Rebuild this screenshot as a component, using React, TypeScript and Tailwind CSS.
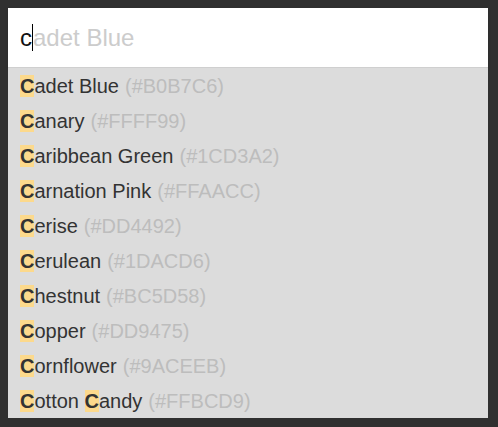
import React from 'react';

type Color = { name: string; hex: string };

const colors: Color[] = [
  { name: 'Cadet Blue', hex: '#B0B7C6' },
  { name: 'Canary', hex: '#FFFF99' },
  { name: 'Caribbean Green', hex: '#1CD3A2' },
  { name: 'Carnation Pink', hex: '#FFAACC' },
  { name: 'Cerise', hex: '#DD4492' },
  { name: 'Cerulean', hex: '#1DACD6' },
  { name: 'Chestnut', hex: '#BC5D58' },
  { name: 'Copper', hex: '#DD9475' },
  { name: 'Cornflower', hex: '#9ACEEB' },
  { name: 'Cotton Candy', hex: '#FFBCD9' },
];

const Highlighted: React.FC<{ text: string }> = ({ text }) => (
  <>
    {text.split(' ').map((word, i) => (
      <React.Fragment key={i}>
        {i > 0 && ' '}
        {word[0].toLowerCase() === 'c' ? (
          <>
            <span className="bg-[#fcd98c] font-bold">{word[0]}</span>
            {word.slice(1)}
          </>
        ) : (
          word
        )}
      </React.Fragment>
    ))}
  </>
);

export default function App() {
  return (
    <div className="w-[498px] h-[427px] bg-[#303030] p-2 font-['Liberation_Sans',Arial,sans-serif]">
      <div className="w-[480px]">
        <div className="h-[60px] bg-white flex items-center px-3 text-[24px] border-b border-[#cfcfcf] shadow-sm">
          <span className="text-[#111]">c</span>
          <span className="w-px h-[27px] bg-black"></span>
          <span className="text-[#cccccc]">adet Blue</span>
        </div>
        <ul className="bg-[#dcdcdc]">
          {colors.map((c) => (
            <li key={c.name} className="h-[35px] flex items-center px-3 text-[20px] text-[#333]">
              <span>
                <Highlighted text={c.name} />
              </span>
              <span className="ml-[6px] text-[#bdbdbd]">({c.hex})</span>
            </li>
          ))}
        </ul>
      </div>
    </div>
  );
}
